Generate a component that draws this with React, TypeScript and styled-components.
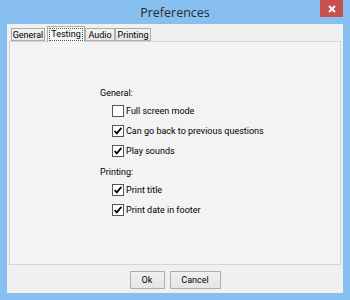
import styled, { createGlobalStyle } from "styled-components";

const GlobalStyle = createGlobalStyle`
  body {
    margin: 0;
    font-family: Roboto, "Liberation Sans", Arial, sans-serif;
  }
`;

const Window = styled.div`
  width: 350px;
  height: 300px;
  background: #88bff1;
  display: flex;
  flex-direction: column;
  box-sizing: border-box;
`;

const TitleBar = styled.div`
  height: 24px;
  display: grid;
  grid-template-columns: 1fr auto 1fr;
`;

const Title = styled.div`
  grid-column: 2;
  align-self: center;
  font-family: "Open Sans", "Liberation Sans", sans-serif;
  font-size: 12.5px;
  color: #2b2b2b;
  padding-top: 1px;
`;

const CloseButton = styled.div`
  grid-column: 3;
  justify-self: end;
  align-self: start;
  width: 23px;
  height: 17px;
  margin-right: 7px;
  background: #c75050;
  display: flex;
  align-items: center;
  justify-content: center;
`;

const Client = styled.div`
  flex: 1;
  margin: 0 7px 7px;
  background: #f0f0f0;
  display: flex;
  flex-direction: column;
`;

const TabStrip = styled.div`
  height: 17px;
  display: flex;
  align-items: flex-end;
  padding-left: 4px;
`;

const Tab = styled.div<{ $active?: boolean; $width: number; $gap?: number }>`
  position: relative;
  z-index: ${(p) => (p.$active ? 1 : 0)};
  box-sizing: border-box;
  width: ${(p) => p.$width}px;
  height: ${(p) => (p.$active ? 16 : 13)}px;
  margin-right: ${(p) => p.$gap ?? 0}px;
  margin-bottom: ${(p) => (p.$active ? -1 : 0)}px;
  border: 1px solid #acacac;
  border-bottom: ${(p) => (p.$active ? "none" : "1px solid #acacac")};
  background: ${(p) =>
    p.$active ? "#f7f7f7" : "linear-gradient(#f2f2f2, #e6e6e6)"};
  font-size: 9px;
  color: #000;
  display: flex;
  align-items: center;
  justify-content: center;
  padding-bottom: ${(p) => (p.$active ? 1 : 0)}px;
`;

const FocusRect = styled.span`
  border: 1px dotted #555;
  padding: 0 1px;
  line-height: 11px;
`;

const Panel = styled.div`
  height: 224px;
  margin: 0 2px;
  box-sizing: border-box;
  border: 1px solid #d5d5d5;
  background: #f3f3f3;
  padding: 43px 0 0 90px;
  display: flex;
  flex-direction: column;
`;

const GroupLabel = styled.div<{ $top?: number }>`
  height: 16px;
  margin-top: ${(p) => p.$top ?? 0}px;
  display: flex;
  align-items: center;
  font-size: 9px;
  color: #000;
`;

const OptionRow = styled.label`
  height: 20px;
  padding-left: 12px;
  display: flex;
  align-items: center;
  gap: 2px;
  font-size: 9px;
  color: #000;
`;

const ButtonRow = styled.div`
  display: flex;
  justify-content: center;
  gap: 5px;
  padding-top: 6px;
`;

const Button = styled.div<{ $width: number }>`
  box-sizing: border-box;
  width: ${(p) => p.$width}px;
  height: 18px;
  border: 1px solid #adadad;
  background: linear-gradient(#f0f0f0, #e5e5e5);
  font-size: 9px;
  color: #000;
  display: flex;
  align-items: center;
  justify-content: center;
`;

const CheckBox = ({ checked }: { checked: boolean }) => (
  <svg width="12" height="12" viewBox="0 0 12 12">
    <rect x="0.5" y="0.5" width="11" height="11" fill="#fff" stroke="#555" />
    {checked && (
      <path
        d="M2.6 6 L4.8 8.4 L9.4 2.9"
        fill="none"
        stroke="#000"
        strokeWidth="1.7"
      />
    )}
  </svg>
);

const generalOptions = [
  { label: "Full screen mode", checked: false },
  { label: "Can go back to previous questions", checked: true },
  { label: "Play sounds", checked: true },
];

const printingOptions = [
  { label: "Print title", checked: true },
  { label: "Print date in footer", checked: true },
];

const App = () => {
  return (
    <Window>
      <GlobalStyle />
      <TitleBar>
        <Title>Preferences</Title>
        <CloseButton>
          <svg width="8" height="8" viewBox="0 0 8 8">
            <path d="M1 1 L7 7 M7 1 L1 7" stroke="#fff" strokeWidth="1.8" />
          </svg>
        </CloseButton>
      </TitleBar>
      <Client>
        <TabStrip>
          <Tab $width={34} $gap={2}>General</Tab>
          <Tab $width={38} $active>
            <FocusRect>Testing</FocusRect>
          </Tab>
          <Tab $width={30}>Audio</Tab>
          <Tab $width={36}>Printing</Tab>
        </TabStrip>
        <Panel>
          <GroupLabel>General:</GroupLabel>
          {generalOptions.map((o) => (
            <OptionRow key={o.label}>
              <CheckBox checked={o.checked} />
              {o.label}
            </OptionRow>
          ))}
          <GroupLabel $top={3}>Printing:</GroupLabel>
          {printingOptions.map((o) => (
            <OptionRow key={o.label}>
              <CheckBox checked={o.checked} />
              {o.label}
            </OptionRow>
          ))}
        </Panel>
        <ButtonRow>
          <Button $width={35}>Ok</Button>
          <Button $width={51}>Cancel</Button>
        </ButtonRow>
      </Client>
    </Window>
  );
};

export default App;
